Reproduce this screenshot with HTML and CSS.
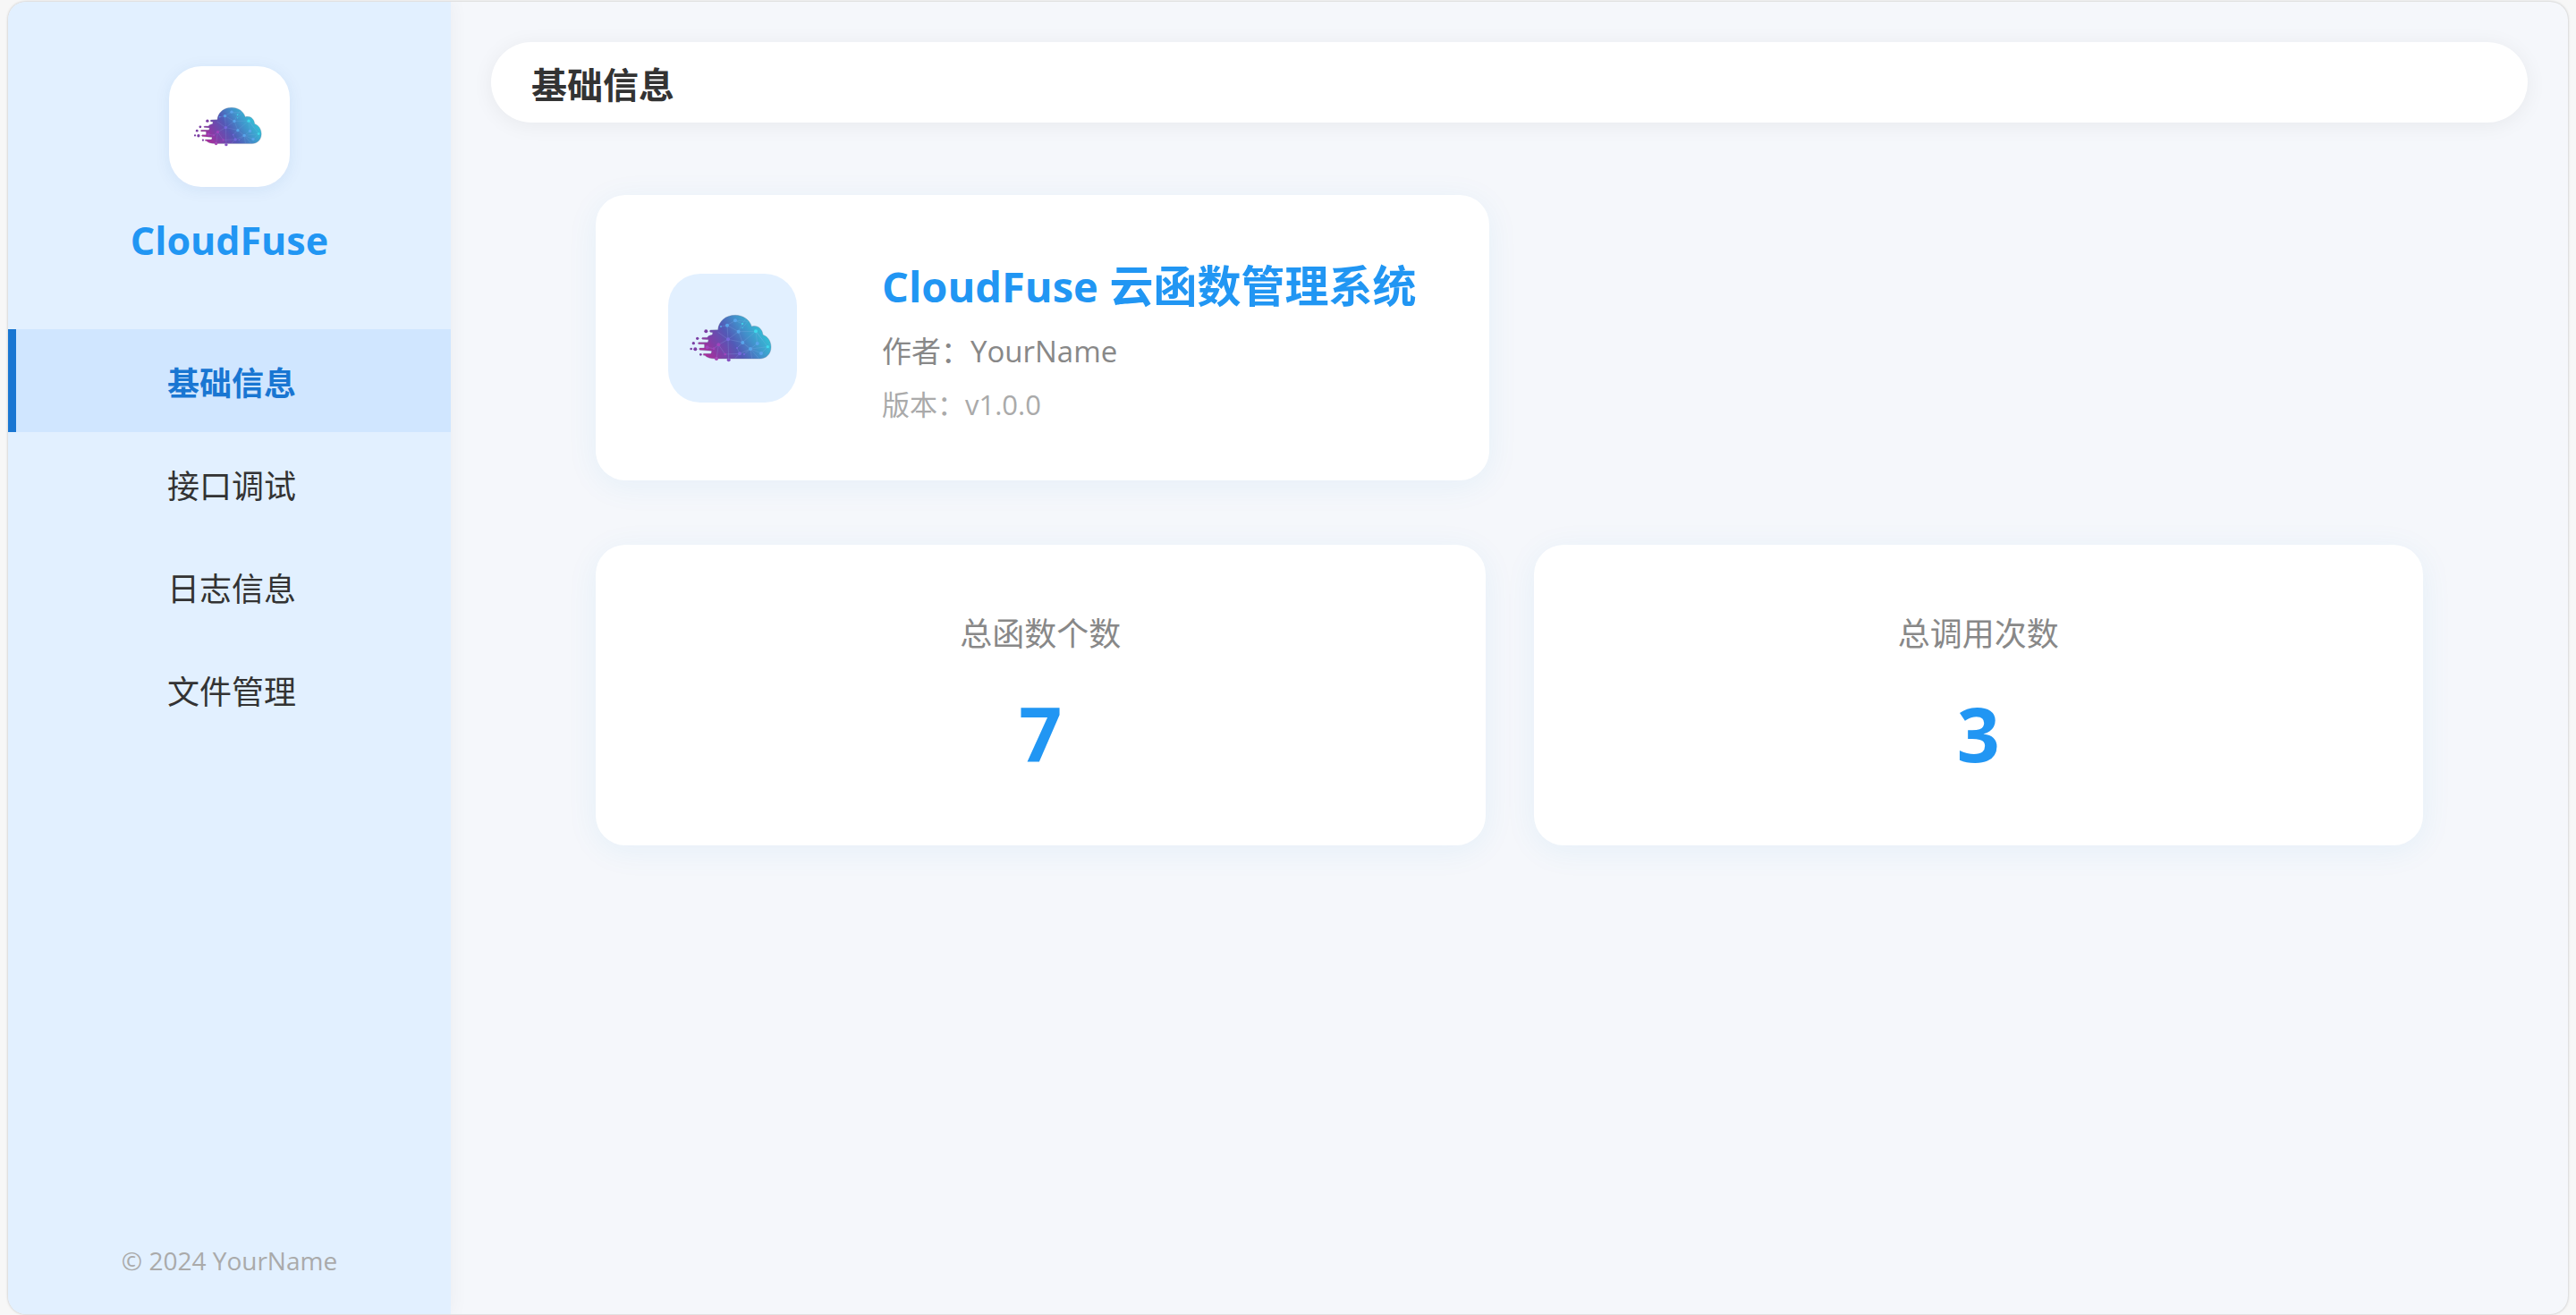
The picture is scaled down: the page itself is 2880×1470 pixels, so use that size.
FILE: index.html
```html
<!DOCTYPE html>
<html lang="zh-CN">
<head>
<meta charset="utf-8">
<meta name="viewport" content="width=device-width, initial-scale=1">
<title>CloudFuse 云函数管理系统</title>
<link rel="stylesheet" href="styles.css">
</head>
<body>
<svg class="defs" width="0" height="0" aria-hidden="true">
  <defs>
    <linearGradient id="cloud-fill" gradientUnits="userSpaceOnUse" x1="150" y1="305" x2="330" y2="185">
      <stop offset="0" stop-color="#b02a98"/>
      <stop offset=".22" stop-color="#803fa8"/>
      <stop offset=".48" stop-color="#5259b6"/>
      <stop offset=".72" stop-color="#428fca"/>
      <stop offset="1" stop-color="#32c3d6"/>
    </linearGradient>
    <symbol id="cloud" viewBox="87 84 300 300">
      <g fill="url(#cloud-fill)">
        <path stroke="#6f7fa0" stroke-width="1.5" stroke-opacity=".7" d="M188 206 C190 177 215 157 246 157 C272 157 294 172 301 195 C320 189 337 202 339 223 C356 229 366 245 366 264 C366 287 350 303 328 303 L180 303 C162 303 150 299 144 292 L140 292 Q137 289 140 286 L164 286 Q168 282 166 277 L127 274 Q122 270 127 267 L142 267 Q144 261 142 254 L123 254 Q119 251 123 248 L153 248 Q157 244 156 239 L136 238 Q131 235 136 232 L152 232 Q155 225 168 223 Q171 220 170 215 L162 214 Q158 211 162 207 Z"/>
      </g>
      <g fill="#7b3fa4">
        <circle cx="148" cy="211" r="6"/>
        <circle cx="119" cy="235" r="5"/>
        <circle cx="106" cy="251" r="5"/>
        <circle cx="112" cy="271" r="6"/>
        <circle cx="98" cy="270" r="4"/>
        <circle cx="130" cy="289" r="4"/>
      </g>
      <circle cx="183" cy="303" r="6" fill="#a844b4"/>
      <circle cx="224" cy="307" r="6" fill="#8650c0"/>
      <path fill="none" stroke="#8fb4ee" stroke-opacity=".45" stroke-width="1.5" d="M198 195 L219 191 L246 175 L270 186 L257 212 L219 191 L222 238 L190 256 L174 269 L152 265 M222 238 L224 307 M222 238 L257 212 L315 211 L270 248 L222 238 M257 212 L271 249 L297 270 L320 252 L315 211 L355 263 L333 285 L297 270 L261 286 L252 267 L271 249 M190 256 L183 303 M190 256 L212 288 L261 286 L245 302 M297 270 L302 302 M297 270 L276 288 M315 211 L338 240 M355 263 L297 270 L325 302 M246 175 L288 178 M270 186 L282 168 M270 199 L288 178 M222 238 L188 214"/>
      <g fill="#58a4ea">
        <circle cx="246" cy="175" r="6"/>
        <circle cx="219" cy="191" r="6"/>
        <circle cx="257" cy="212" r="6"/>
        <circle cx="198" cy="195" r="3"/>
        <circle cx="271" cy="249" r="6"/>
        <circle cx="320" cy="252" r="6"/>
        <circle cx="297" cy="270" r="6"/>
        <circle cx="333" cy="285" r="6"/>
      </g>
      <g fill="#3fd8ea">
        <circle cx="315" cy="211" r="6"/>
        <circle cx="355" cy="263" r="5"/>
        <circle cx="270" cy="186" r="3"/>
        <circle cx="270" cy="199" r="2"/>
      </g>
      <g fill="#7468dc">
        <circle cx="222" cy="238" r="6"/>
        <circle cx="261" cy="286" r="6"/>
        <circle cx="252" cy="267" r="3"/>
        <circle cx="276" cy="288" r="3"/>
      </g>
      <g fill="#a044bc">
        <circle cx="190" cy="256" r="6"/>
        <circle cx="152" cy="265" r="6"/>
        <circle cx="174" cy="269" r="4"/>
        <circle cx="212" cy="288" r="4"/>
      </g>
    </symbol>
  </defs>
</svg>

<div class="window">
  <aside class="sidebar">
    <div class="brand">
      <div class="brand-logo"><svg class="brand-icon" aria-hidden="true"><use href="#cloud"/></svg></div>
      <div class="brand-name">CloudFuse</div>
    </div>
    <nav class="menu">
      <a class="menu-item active" href="#info" aria-current="page">基础信息</a>
      <a class="menu-item" href="#debug">接口调试</a>
      <a class="menu-item" href="#logs">日志信息</a>
      <a class="menu-item" href="#files">文件管理</a>
    </nav>
    <footer class="copyright">© 2024 YourName</footer>
  </aside>

  <main class="main">
    <header class="page-header"><h1 class="page-title">基础信息</h1></header>
    <div class="content">
      <section class="card about">
        <div class="about-logo"><svg class="about-icon" aria-hidden="true"><use href="#cloud"/></svg></div>
        <div class="about-text">
          <h2 class="about-title"><span class="about-product">CloudFuse</span> 云函数管理系统</h2>
          <p class="about-author">作者：YourName</p>
          <p class="about-version">版本：v1.0.0</p>
        </div>
      </section>
      <div class="stats">
        <section class="card stat">
          <h3 class="stat-label">总函数个数</h3>
          <p class="stat-value">7</p>
        </section>
        <section class="card stat">
          <h3 class="stat-label">总调用次数</h3>
          <p class="stat-value">3</p>
        </section>
      </div>
    </div>
  </main>
</div>
</body>
</html>
```

FILE: styles.css
```css
* {
  box-sizing: border-box;
}

body {
  margin: 0;
  padding: 2px 9px 1px;
  background: #f7f7f7;
  color: #333;
  font-family: "Open Sans", "Noto Sans CJK SC", sans-serif;
}

h1, h2, h3, p {
  margin: 0;
}

.defs {
  position: absolute;
}

.window {
  display: flex;
  min-height: calc(100vh - 3px);
  border-radius: 20px;
  overflow: hidden;
  background: #f5f7fb;
  box-shadow: 0 0 3px rgba(0, 0, 0, 0.25);
}

/* Sidebar */
.sidebar {
  display: flex;
  flex-direction: column;
  flex: 0 0 495px;
  padding: 72px 0 39px;
  background: #e2f0ff;
  box-shadow: 3px 0 18px rgba(0, 0, 0, 0.04);
}

.brand {
  display: flex;
  flex-direction: column;
  align-items: center;
  gap: 30px;
  margin-bottom: 69px;
}

.brand-logo {
  display: grid;
  place-items: center;
  width: 135px;
  height: 135px;
  border-radius: 36px;
  background: #fff;
  box-shadow: 0 3px 18px rgba(25, 80, 150, 0.08);
}

.brand-icon {
  width: 83px;
  height: 83px;
}

.brand-name {
  color: #2196f3;
  font-size: 43px;
  font-weight: 700;
  line-height: 60px;
}

.menu {
  display: flex;
  flex-direction: column;
}

.menu-item {
  padding: 34px 4px 27px 0;
  border-left: 9px solid transparent;
  color: #333;
  font-size: 36px;
  line-height: 54px;
  text-align: center;
  text-decoration: none;
}

.menu-item.active {
  border-left-color: #1976d2;
  background: #d0e6ff;
  color: #1976d2;
  font-weight: 700;
}

.copyright {
  margin-top: auto;
  color: #aaa;
  font-size: 28px;
  line-height: 42px;
  text-align: center;
}

/* Main area */
.main {
  flex: 1;
  min-width: 0;
  padding: 45px;
}

.page-header {
  padding: 18px 45px 12px;
  border-radius: 45px;
  background: #fff;
  box-shadow: 0 3px 24px rgba(0, 0, 0, 0.06);
}

.page-title {
  font-size: 40px;
  font-weight: 700;
  line-height: 60px;
}

.content {
  display: flex;
  flex-direction: column;
  align-items: flex-start;
  gap: 72px;
  padding: 81px 117px 0;
}

.card {
  border-radius: 33px;
  background: #fff;
  box-shadow: 0 6px 36px rgba(33, 135, 215, 0.07);
}

.about {
  display: flex;
  align-items: center;
  gap: 95px;
  padding: 64px 81px;
}

.about-logo {
  display: grid;
  place-items: center;
  width: 144px;
  height: 144px;
  border-radius: 36px;
  background: #e2f0ff;
}

.about-icon {
  width: 100px;
  height: 100px;
}

.about-text {
  display: flex;
  flex-direction: column;
  gap: 16px;
  padding-top: 2px;
}

.about-title {
  color: #2196f3;
  font-size: 49px;
  font-weight: 700;
  line-height: 70px;
}

.about-product {
  font-size: 47px;
  line-height: 1;
}

.about-author {
  color: #888;
  font-size: 33px;
  line-height: 45px;
}

.about-version {
  color: #aaa;
  font-size: 31px;
  line-height: 42px;
}

.stats {
  display: grid;
  grid-template-columns: 1fr 1fr;
  gap: 54px;
  width: 100%;
}

.stat {
  display: flex;
  flex-direction: column;
  align-items: center;
  gap: 27px;
  padding: 73px 81px 68px;
}

.stat-label {
  color: #888;
  font-size: 36px;
  font-weight: 400;
  line-height: 54px;
}

.stat-value {
  color: #2196f3;
  font-size: 84px;
  font-weight: 700;
  line-height: 114px;
}
```
